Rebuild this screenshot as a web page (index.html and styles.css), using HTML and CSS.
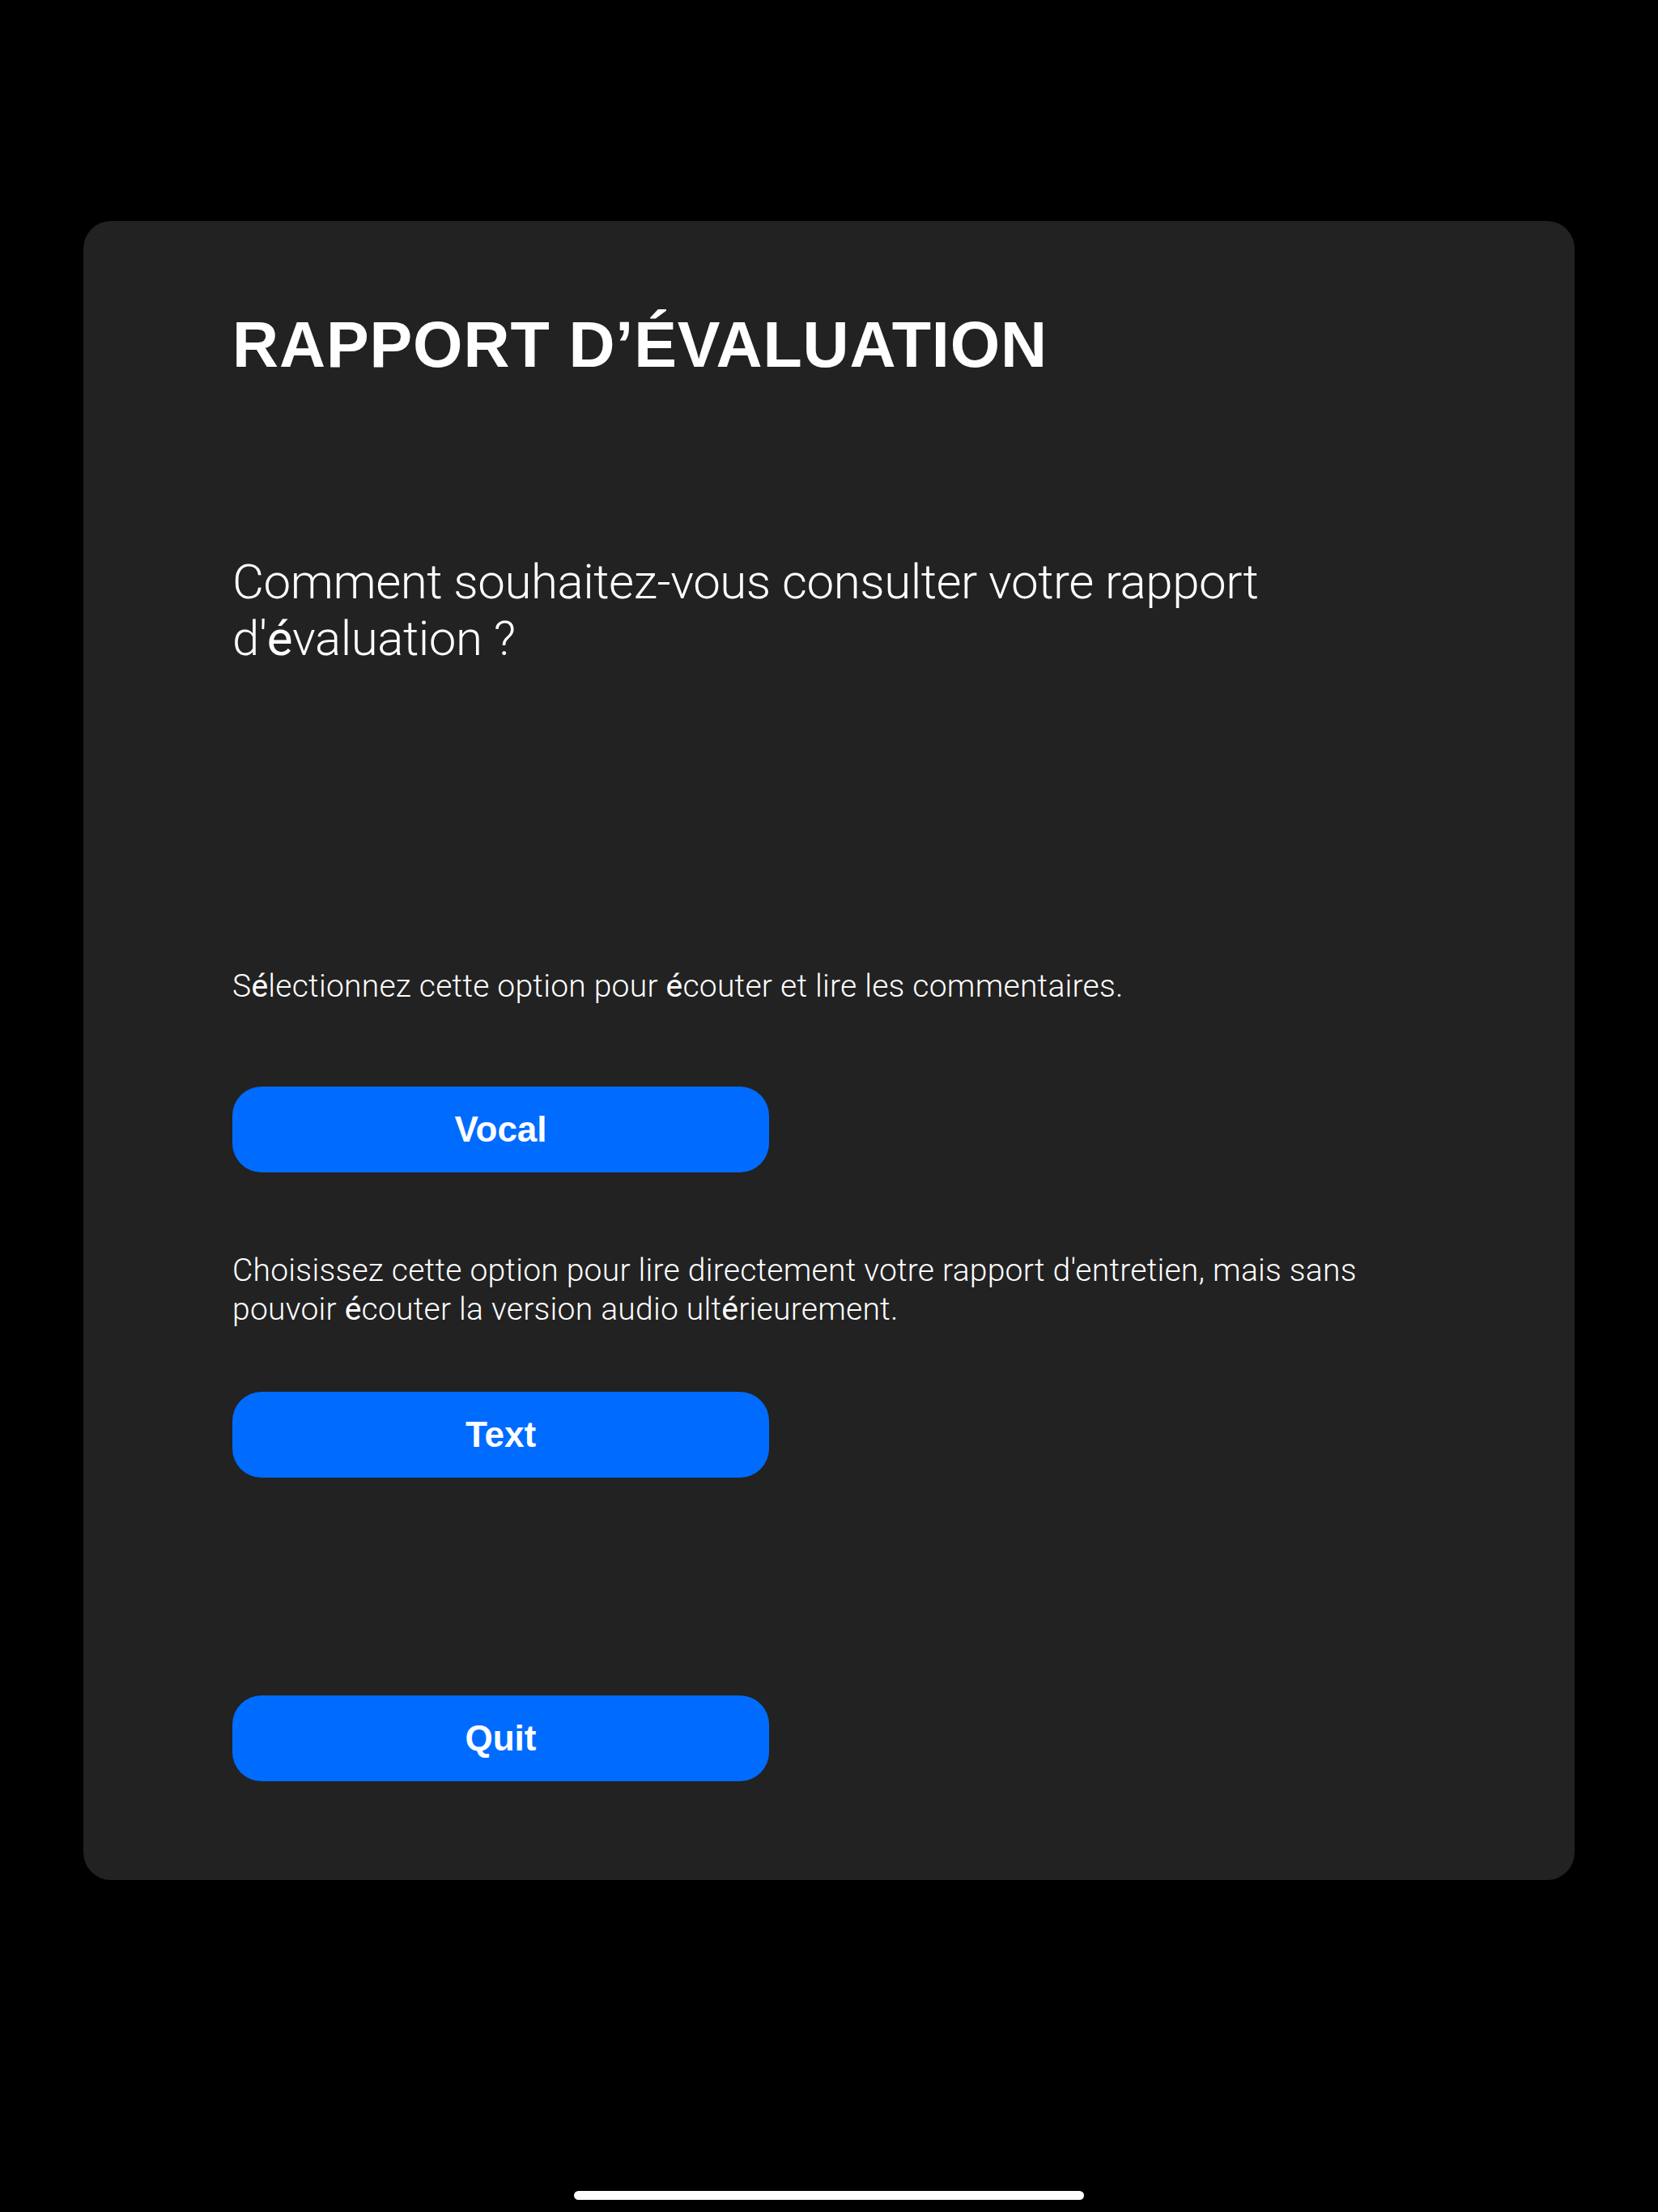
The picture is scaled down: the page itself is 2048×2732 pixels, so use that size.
FILE: index.html
```html
<!DOCTYPE html>
<html lang="fr">
<head>
<meta charset="utf-8">
<title>Rapport d'évaluation</title>
<link rel="stylesheet" href="styles.css">
</head>
<body>
<main class="screen">
  <section class="card">
    <h1 class="title">RAPPORT D’ÉVALUATION</h1>
    <p class="question">Comment souhaitez-vous consulter votre rapport d'<span class="acc">é</span>valuation ?</p>
    <p class="hint hint-vocal">S<span class="acc">é</span>lectionnez cette option pour <span class="acc">é</span>couter et lire les commentaires.</p>
    <button class="btn btn-vocal" type="button">Vocal</button>
    <p class="hint hint-text">Choisissez cette option pour lire directement votre rapport d'entretien, mais sans pouvoir <span class="acc">é</span>couter la version audio ult<span class="acc">é</span>rieurement.</p>
    <button class="btn btn-text" type="button">Text</button>
    <button class="btn btn-quit" type="button">Quit</button>
  </section>
  <div class="home-indicator"></div>
</main>
</body>
</html>
```

FILE: styles.css
```css
html, body {
  margin: 0;
  padding: 0;
  background: #000;
}

.screen {
  width: 2048px;
  height: 2732px;
  display: flex;
  flex-direction: column;
  align-items: center;
  padding-top: 273px;
  box-sizing: border-box;
  background: #000;
}

.card {
  width: 1842px;
  height: 2049px;
  box-sizing: border-box;
  background: #222222;
  border-radius: 34px;
  padding: 108px 184px 0 184px;
  display: flex;
  flex-direction: column;
  align-items: flex-start;
  color: #fff;
}

.title {
  margin: 0;
  font-family: "Liberation Sans", Arial, sans-serif;
  font-weight: 700;
  font-size: 79px;
  line-height: 90px;
  letter-spacing: 0.9px;
}

.question {
  margin: 213px 0 0 0;
  font-family: Roboto, "Liberation Sans", sans-serif;
  font-weight: 300;
  font-size: 60px;
  line-height: 70px;
  letter-spacing: -0.45px;
}

.hint {
  margin: 0;
  font-family: Roboto, "Liberation Sans", sans-serif;
  font-weight: 300;
  font-size: 39px;
  line-height: 48px;
  letter-spacing: 0.25px;
}

.acc {
  font-weight: 400;
}

.hint-vocal {
  margin-top: 370px;
}

.hint-text {
  margin-top: 97px;
}

.btn {
  width: 663px;
  height: 106px;
  border: none;
  border-radius: 36px;
  background: #006cff;
  color: #fff;
  font-family: "Liberation Sans", Arial, sans-serif;
  font-weight: 700;
  font-size: 44px;
  display: flex;
  align-items: center;
  justify-content: center;
  padding: 0;
}

.btn-vocal {
  margin-top: 100px;
}

.btn-text {
  margin-top: 78px;
}

.btn-quit {
  margin-top: 269px;
}

.home-indicator {
  margin-top: 384px;
  width: 630px;
  height: 11px;
  border-radius: 6px;
  background: #fff;
}
```
